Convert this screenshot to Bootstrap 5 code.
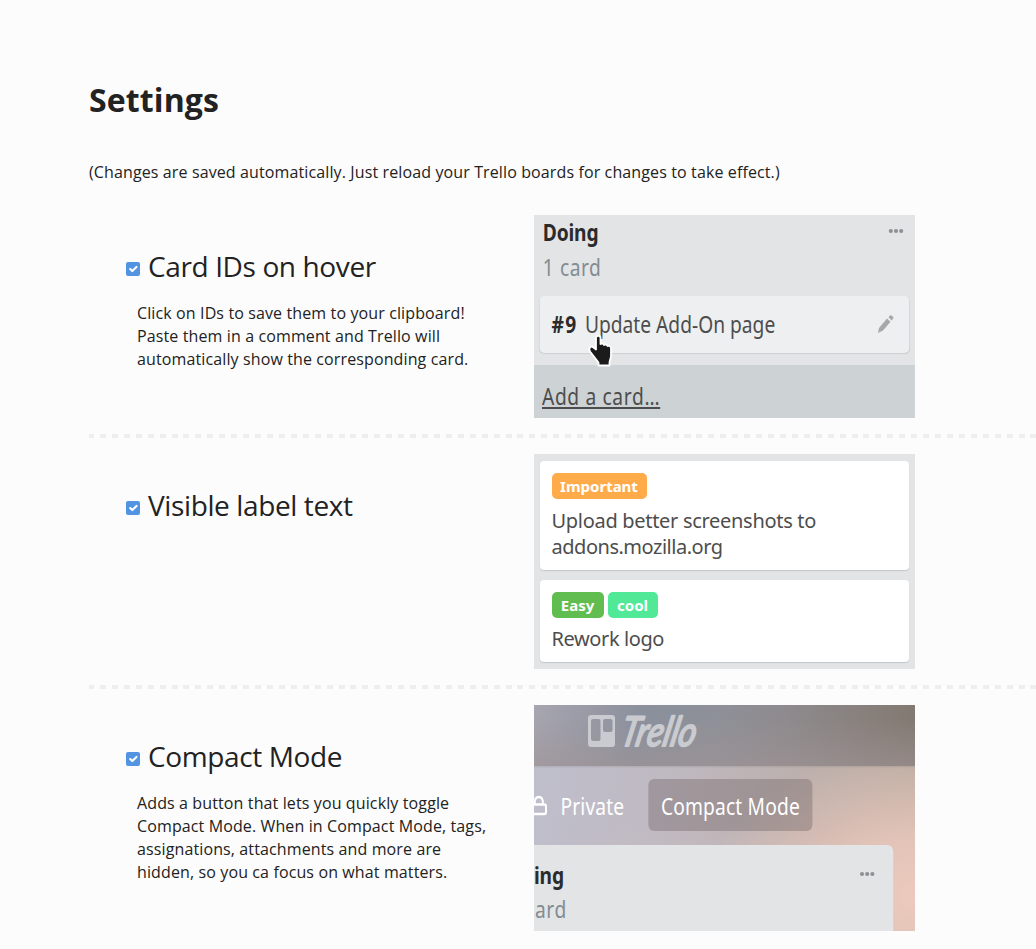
<!DOCTYPE html>
<html lang="en">
<head>
<meta charset="utf-8">
<title>Settings</title>
<link href="https://cdn.jsdelivr.net/npm/bootstrap@5.3.0/dist/css/bootstrap.min.css" rel="stylesheet">
<style>
body{background:#fcfcfc;color:#222;font-family:"Open Sans",sans-serif;font-size:16px;line-height:23px;overflow:hidden;height:949px}
.page{padding:78px 0 0 89px}
h1{font-size:32px;line-height:44px;font-weight:700;letter-spacing:.12px}
.intro{margin:39px 0 0;padding-bottom:31px;white-space:nowrap;letter-spacing:.12px}
.setting{display:grid;grid-template-columns:445px 381px}
.setting h2{font-size:28px;line-height:38px;font-weight:400;margin:0;white-space:nowrap;letter-spacing:-.38px}
.setting-text{padding:32px 0 0 37px}
.setting-text p{margin:17px 0 0 11px;width:355px;white-space:nowrap;letter-spacing:.12px}
.form-check-input.toggle{width:14px;height:14px;margin:6px 8px 0 0;border:0;border-radius:2px;box-shadow:none}
.toggle:checked{background-color:#5294e2}
.divider{height:4px;margin:16px 0;background:repeating-linear-gradient(90deg,#eee 0 6px,transparent 6px 11.93px) -1px 0/1200px 4px}
.preview{overflow:hidden;font-family:"Noto Sans",sans-serif;color:#4d4d4d;background:#e2e4e6;position:relative}
.narrow{transform:scaleX(.8);transform-origin:0 0;width:476.25px;font-size:24px;line-height:34px;white-space:nowrap}
.p1{height:203px}.p2{height:215px;padding:7px 6px 6px;font-size:20px;line-height:26px;letter-spacing:-.3px}.p3{height:226px}
.list-name{font-weight:700;color:#2b2b2b;letter-spacing:-.2px}
.count{color:#838c91;letter-spacing:.7px}
.dots{width:19px;height:6px;fill:#8c9193}
.hover-card{height:57px;margin:12px 7px 0;background:#edeff0;border-radius:6px/5px;box-shadow:0 1px 1px #cdd0d2;padding:0 19px 2px 15px}
.hover-card b{color:#2b2b2b;margin-right:9px;letter-spacing:1.700px}
.add{margin-top:12px;height:53px;background:#cdd2d4;padding:14px 0 0 10px;letter-spacing:.8px}
.pointer{position:absolute;left:53px;top:119px}
.task{background:#fff;border-radius:4px;box-shadow:0 1px 1px #c4c6c8;padding:12px 11.500px 0;width:368.500px;white-space:nowrap}
.tag{display:inline-block;height:26px;line-height:27px;border-radius:5px;color:#fff;font-size:15px;font-weight:700;text-align:center;letter-spacing:0}
.p3{background:radial-gradient(ellipse 210px 150px at 100% 85%,#eccabd 0,#e2c3b8 40%,rgba(212,188,178,0) 100%),radial-gradient(ellipse 260px 110px at 45% 100%,#cfbfc2 0,rgba(207,191,194,0) 100%),linear-gradient(100deg,#bfbfcd 0%,#bfb9c1 35%,#bcb0ae 65%,#b9aa9d 100%)}
.topbar{height:61px;background:linear-gradient(180deg,rgba(160,148,150,0) 20%,rgba(160,148,150,.6) 100%),linear-gradient(100deg,#a7a5b0 0%,#8a909c 28%,#8e9098 48%,#8e8a8d 65%,#82786f 100%);box-shadow:0 1px 2px #77777740;padding-left:54px}
.board-tools{height:79px;color:#fff}
.mode{width:205px;height:52px;margin-top:-1px;border-radius:7px/6px;background:rgba(116,103,105,.4);letter-spacing:.2px;padding-top:1px}
.list-cut{width:449px;height:90px;background:#e2e4e6;border-radius:0 7px 0 0/0 6px 0 0}
</style>
</head>
<body>
<main class="page">
<h1 class="m-0">Settings</h1>
<p class="intro">(Changes are saved automatically. Just reload your Trello boards for changes to take effect.)</p>

<section class="setting">
  <div class="setting-text">
    <label class="d-flex align-items-center"><input class="form-check-input toggle" type="checkbox" checked><h2>Card IDs on hover</h2></label>
    <p>Click on IDs to save them to your clipboard!<br>Paste them in a comment and Trello will<br>automatically show the corresponding card.</p>
  </div>
  <div class="preview p1">
    <div class="narrow">
      <div class="d-flex justify-content-between" style="padding:0 14px 0 11px"><span class="list-name">Doing</span><svg class="dots" style="margin-top:13px" viewBox="0 0 19 6"><ellipse cx="3" cy="3" rx="2.6" ry="2.1"/><ellipse cx="9.5" cy="3" rx="2.6" ry="2.1"/><ellipse cx="16" cy="3" rx="2.6" ry="2.1"/></svg></div>
      <div class="count" style="padding:1px 0 0 11px">1 card</div>
      <div class="hover-card d-flex align-items-center"><b>#9</b><span>Update Add-On page</span>
        <svg class="ms-auto" width="20" height="18" viewBox="0 0 16 18" preserveAspectRatio="none" fill="#a6a8a9"><path d="M0 18l1-5L9 3.500l3.500 3.300L5 15.500zM10.500 2.300l1.500-1.700q.8-.8 1.700 0l1.400 1.300q.8.800 0 1.700L13.800 5.500z"/></svg></div>
      <div class="add"><u>Add a card…</u></div>
    </div>
    <svg class="pointer" width="27" height="34" viewBox="0 0 27 34"><path d="M9 4c0-3 4.500-3 4.500 0v6c1.500-1 3-.5 3.500 1 1.500-1 3-.3 3.500 1 2-.7 3.500.5 3.500 2.500v7c0 3-1.500 5-1.500 7v3H11.500v-3l-8.500-11c-2-4 1-6 3.500-4l2.500 2z" fill="#1b1b1b" stroke="#fff" stroke-width="1.800" stroke-linejoin="round"/></svg>
  </div>
</section>
<div class="divider"></div>
<section class="setting">
  <div class="setting-text"><label class="d-flex align-items-center"><input class="form-check-input toggle" type="checkbox" checked><h2>Visible label text</h2></label></div>
  <div class="preview p2">
    <div class="task" style="height:109px"><span class="tag d-block" style="width:95px;background:#ffab4a">Important</span><div style="margin-top:9px">Upload better screenshots to<br><span style="letter-spacing:-.48px">addons.mozilla.org</span></div></div>
    <div class="task" style="height:82px;margin-top:10px"><div class="d-flex gap-1"><span class="tag" style="width:52px;background:#61bd4f">Easy</span><span class="tag" style="width:50px;background:#51e898">cool</span></div><div style="margin-top:8px;letter-spacing:-.4px">Rework logo</div></div>
  </div>
</section>
<div class="divider"></div>
<section class="setting">
  <div class="setting-text">
    <label class="d-flex align-items-center"><input class="form-check-input toggle" type="checkbox" checked><h2>Compact Mode</h2></label>
    <p>Adds a button that lets you quickly toggle<br>Compact Mode. When in Compact Mode, tags,<br>assignations, attachments and more are<br>hidden, so you ca focus on what matters.</p>
  </div>
  <div class="preview p3">
    <div class="topbar"><svg class="d-block overflow-visible" width="130" height="60" viewBox="0 0 130 60" fill="#c9cbd0"><path fill-rule="evenodd" d="M3 10h21q3 0 3 3v26q0 3-3 3H3q-3 0-3-3V13q0-3 3-3zm2 4q-2 0-2 2v18q0 2 2 2h5.500q2 0 2-2V16q0-2-2-2zm12 0q-2 0-2 2v9q0 2 2 2h5.500q2 0 2-2v-9q0-2-2-2z"/><text transform="translate(31 40.500) skewX(-12)" font-family="Lato,sans-serif" font-style="italic" font-weight="400" font-size="41" textLength="75" lengthAdjust="spacingAndGlyphs" stroke="#c9cbd0" stroke-width="2" stroke-linejoin="round">Trello</text></svg></div>
    <div class="narrow">
      <div class="board-tools d-flex align-items-center">
        <svg width="18" height="22" viewBox="0 0 18 22" fill="none" stroke="#fff" stroke-width="2.500"><path d="M-6 9.500H13q2 0 2 2V17q0 2-2 2H-6M1 9V6q1-4 5-4t5 4v3"/></svg>
        <span style="margin-left:15px;width:110px;letter-spacing:.2px">Private</span><span class="mode d-flex align-items-center justify-content-center">Compact Mode</span>
      </div>
      <div class="list-cut">
        <div class="d-flex justify-content-between" style="padding:13px 23px 0 0"><span class="list-name">ing</span><svg class="dots" style="margin-top:13px" viewBox="0 0 19 6"><ellipse cx="3" cy="3" rx="2.600" ry="2.100"/><ellipse cx="9.500" cy="3" rx="2.600" ry="2.100"/><ellipse cx="16" cy="3" rx="2.600" ry="2.100"/></svg></div>
        <div class="count" style="margin-left:-11px">card</div>
      </div>
    </div>
  </div>
</section>
</main>
<script src="https://cdn.jsdelivr.net/npm/bootstrap@5.3.0/dist/js/bootstrap.bundle.min.js"></script>
</body>
</html>
